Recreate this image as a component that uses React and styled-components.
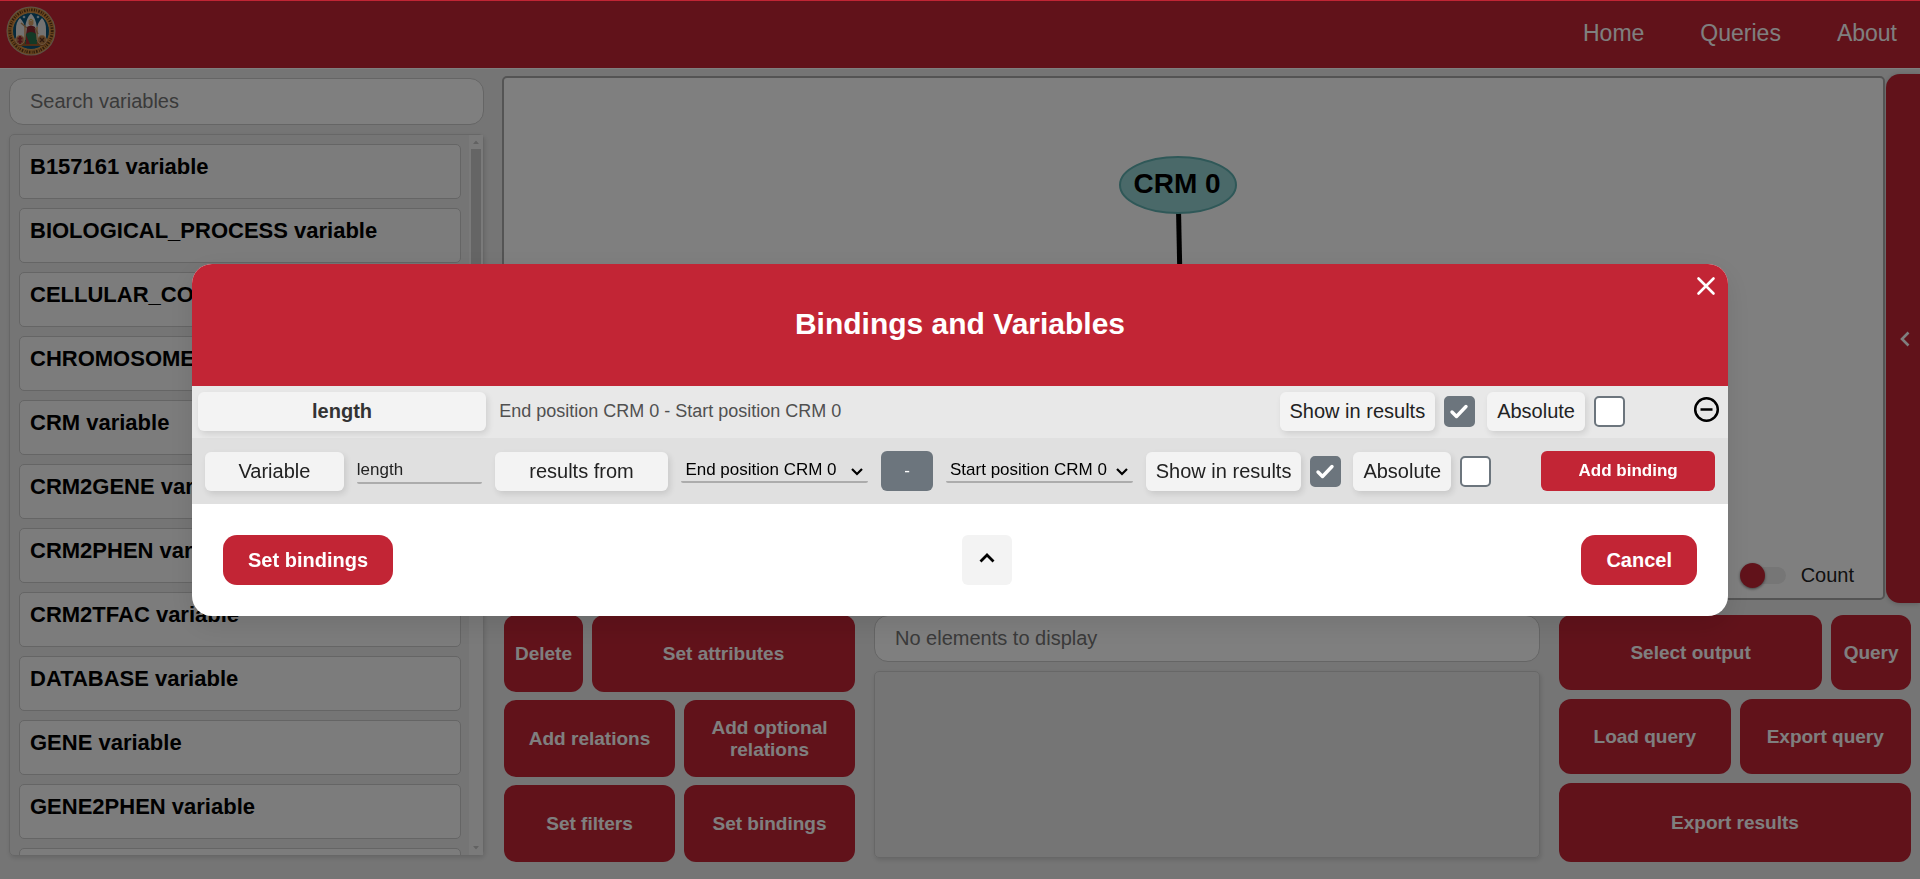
import React from "react";
import styled, { createGlobalStyle } from "styled-components";

const red = "#c22535";
const slate = "#6c757d";

const GlobalStyle = createGlobalStyle`
  *, *::before, *::after { box-sizing: border-box; }
  body {
    margin: 0;
    background: #eaeaea;
    color: #000;
    font-family: "Liberation Sans", Arial, Helvetica, sans-serif;
    font-size: 20px;
  }
  button, input, select { font: inherit; color: inherit; margin: 0; }
  button { cursor: pointer; border: 0; padding: 0; }
`;

const Page = styled.div`
  height: 100vh;
  min-height: 700px;
  display: flex;
  flex-direction: column;
`;

const Header = styled.header`
  display: flex;
  align-items: center;
  justify-content: space-between;
  height: 69px;
  padding: 0 23px 2px 6px;
  background: ${red};
  border-bottom: 1px solid #fff;
`;

const Logo = styled.svg`
  display: block;
  margin-bottom: 4px;
`;

const Nav = styled.nav`
  display: flex;
  gap: 56px;
`;

const NavLink = styled.a`
  color: #fff;
  font-size: 23px;
  text-decoration: none;
`;

const Workspace = styled.div`
  flex: 1;
  min-height: 0;
  display: grid;
  grid-template-columns: minmax(0, 475fr) minmax(0, 1418fr);
  column-gap: 18px;
  padding-left: 9px;
`;

const Sidebar = styled.aside`
  display: flex;
  flex-direction: column;
  gap: 9px;
  min-height: 0;
  padding: 9px 0 23px;
`;

const SearchBox = styled.input`
  width: 100%;
  height: 47px;
  padding: 0 20px;
  border: 1px solid #cacaca;
  border-radius: 14px;
  background: #fff;
  &::placeholder { color: #757575; opacity: 1; }
`;

const ListPanel = styled.div`
  flex: 1;
  min-height: 0;
  display: flex;
  border: 1px solid #cfcfcf;
  border-radius: 5px;
  box-shadow: 1px 2px 4px rgba(0, 0, 0, 0.12);
`;

const VariableList = styled.ul`
  flex: 1;
  margin: 0;
  padding: 9px 8px 0 9px;
  list-style: none;
  display: flex;
  flex-direction: column;
  gap: 9px;
  overflow: hidden;
`;

const VariableCard = styled.li`
  flex: none;
  height: 55px;
  padding: 9px 10px;
  border: 1px solid #cacaca;
  border-radius: 5px;
  background: #f8f8f8;
  font-size: 22px;
  font-weight: bold;
  line-height: 26px;
  white-space: nowrap;
`;

const Scrollbar = styled.div`
  width: 14px;
  display: flex;
  flex-direction: column;
  align-items: center;
  background: #f5f5f5;
`;

const ScrollThumb = styled.div`
  width: 10px;
  height: 48%;
  margin-bottom: auto;
  background: #cbcbcb;
`;

const ScrollArrow = styled.svg`
  flex: none;
  display: block;
`;

const Main = styled.main`
  display: flex;
  flex-direction: column;
  gap: 12px;
  min-height: 0;
  padding: 5px 0 17px;
`;

const CanvasRow = styled.div`
  flex: 1;
  min-height: 0;
  display: flex;
  gap: 1px;
`;

const Canvas = styled.section`
  position: relative;
  flex: 1;
  margin: 2px 0 3px;
  border: 2px solid #a8a8a8;
  border-radius: 5px;
  background: #fff;
`;

const Graph = styled.svg`
  display: block;
  position: absolute;
  width: 100%;
  height: 100%;
  font-weight: bold;
  font-size: 28px;
`;

const CountToggle = styled.label`
  position: absolute;
  right: 29px;
  bottom: 10px;
  display: flex;
  align-items: center;
  gap: 15px;
  color: #222;
`;

const Switch = styled.input`
  appearance: none;
  position: relative;
  width: 46px;
  height: 25px;
  &::before {
    content: "";
    position: absolute;
    inset: 4px 0 4px 6px;
    border-radius: 9px;
    background: #ececec;
  }
  &::after {
    content: "";
    position: absolute;
    left: 0;
    top: 0;
    width: 25px;
    height: 25px;
    border-radius: 50%;
    background: ${red};
    box-shadow: 0 1px 3px rgba(0, 0, 0, 0.5);
  }
`;

const DrawerTab = styled.button`
  width: 34px;
  display: flex;
  align-items: center;
  justify-content: center;
  padding-left: 2px;
  border-radius: 14px 0 0 14px;
  background: ${red};
  color: #fff;
  box-shadow: 0 1px 5px rgba(0, 0, 0, 0.2);
`;

const ControlRow = styled.div`
  display: grid;
  grid-template-columns: minmax(0, 351fr) minmax(0, 666fr) minmax(0, 352fr);
  column-gap: 19px;
  min-height: 247px;
  padding: 0 9px 0 2px;
`;

const ButtonStack = styled.div`
  display: grid;
  grid-template-rows: ${(p) => p.$rows};
  row-gap: ${(p) => p.$gap}px;
`;

const ButtonRow = styled.div`
  display: grid;
  grid-template-columns: ${(p) => p.$columns};
  column-gap: 9px;
`;

const ActionButton = styled.button`
  border-radius: 12px;
  background: ${red};
  color: #fff;
  font-size: 19px;
  font-weight: bold;
  line-height: 22px;
`;

const Elements = styled.section`
  display: flex;
  flex-direction: column;
  gap: 9px;
  padding-bottom: 4px;
`;

const ElementPanel = styled.div`
  flex: 1;
  border: 1px solid #cfcfcf;
  border-radius: 5px;
  box-shadow: 1px 2px 4px rgba(0, 0, 0, 0.12);
`;

const Overlay = styled.div`
  position: fixed;
  inset: 1px 0 0;
  display: flex;
  align-items: center;
  justify-content: center;
  background: rgba(0, 0, 0, 0.5);
`;

const Dialog = styled.section`
  position: relative;
  width: 80%;
  border-radius: 20px;
  overflow: hidden;
  background: #fff;
  box-shadow: 0 8px 28px rgba(0, 0, 0, 0.1);
`;

const DialogHeader = styled.header`
  display: flex;
  align-items: center;
  justify-content: center;
  height: 122px;
  padding-bottom: 2px;
  background: ${red};
  color: #fff;
`;

const DialogTitle = styled.h2`
  margin: 0;
  font-size: 30px;
  line-height: 34px;
`;

const CloseButton = styled.button`
  position: absolute;
  top: 12px;
  right: 12px;
  width: 20px;
  height: 20px;
  background: none;
  color: #fff;
  svg { display: block; }
`;

const BindingRow = styled.div`
  display: grid;
  grid-template-columns: minmax(0, 288fr) minmax(0, 767fr) auto auto;
  align-items: center;
  column-gap: 13px;
  padding: 6px 8px 7px 6px;
  background: #e8e8e8;
`;

const BindingForm = styled.form`
  display: grid;
  grid-template-columns: 139fr 125fr 174fr 187fr 52fr 187fr auto 174fr;
  align-items: center;
  column-gap: 13px;
  padding: 13px;
  background: #e0e0e0;
`;

const Pill = styled.label`
  display: flex;
  align-items: center;
  justify-content: center;
  height: 39px;
  padding: 0 10px;
  border-radius: 6px;
  background: #f3f3f3;
  color: ${(p) => (p.$strong ? "#333" : "#222")};
  font-weight: ${(p) => (p.$strong ? "bold" : "normal")};
  white-space: nowrap;
  box-shadow: 2px 3px 6px rgba(0, 0, 0, 0.11);
`;

const Expression = styled.span`
  color: #505050;
  font-size: 18px;
`;

const Options = styled.div`
  display: flex;
  align-items: center;
  gap: 12px;
  margin-right: ${(p) => p.$space}px;
`;

const Option = styled.div`
  display: flex;
  align-items: center;
  gap: 9px;
`;

const CheckWrap = styled.span`
  position: relative;
  width: 31px;
  height: 31px;
  svg {
    position: absolute;
    inset: 0;
    pointer-events: none;
  }
`;

const CheckInput = styled.input`
  appearance: none;
  display: block;
  width: 31px;
  height: 31px;
  border: 2px solid ${slate};
  border-radius: 5px;
  background: #fff;
  &:checked { background: ${slate}; }
  &:not(:checked) + svg { display: none; }
`;

const RemoveButton = styled.button`
  width: 27px;
  height: 31px;
  background: none;
`;

const NameInput = styled.input`
  width: 100%;
  min-width: 0;
  height: 25px;
  padding: 0;
  border: 0;
  border-bottom: 2px solid #acacac;
  border-radius: 2px;
  background: transparent;
  color: #222;
  font-size: 17px;
`;

const SelectWrap = styled.span`
  position: relative;
  display: block;
  svg {
    position: absolute;
    right: 5px;
    top: 7px;
    pointer-events: none;
  }
`;

const Select = styled.select`
  appearance: none;
  display: block;
  width: 100%;
  height: 23px;
  padding: 0 22px 2px 4px;
  border: 0;
  border-bottom: 2px solid #acacac;
  border-radius: 2px;
  background: transparent;
  font-size: 17px;
  line-height: 20px;
`;

const FormButton = styled.button`
  height: 40px;
  border-radius: 6px;
  background: ${(p) => (p.$neutral ? slate : red)};
  color: #fff;
  font-size: 17px;
  font-weight: ${(p) => (p.$neutral ? "normal" : "bold")};
`;

const DialogFooter = styled.footer`
  display: flex;
  align-items: center;
  justify-content: space-between;
  padding: 31px;
`;

const DialogButton = styled.button`
  height: 50px;
  padding: 0 25px;
  border-radius: 14px;
  background: ${red};
  color: #fff;
  font-weight: bold;
`;

const CollapseButton = styled.button`
  display: flex;
  align-items: center;
  justify-content: center;
  width: 50px;
  height: 50px;
  padding-bottom: 4px;
  border-radius: 6px;
  background: #f3f3f3;
`;

const variables = [
  "B157161",
  "BIOLOGICAL_PROCESS",
  "CELLULAR_COMPONENT",
  "CHROMOSOME",
  "CRM",
  "CRM2GENE",
  "CRM2PHEN",
  "CRM2TFAC",
  "DATABASE",
  "GENE",
  "GENE2PHEN",
];

const positions = ["End position CRM 0", "Start position CRM 0"];

function Seal() {
  return (
    <Logo width="50" height="50" viewBox="0 0 50 50" role="img" aria-label="University seal">
      <circle cx="25" cy="25" r="24.5" fill="#b9a58c" />
      <circle cx="25" cy="25" r="23.5" fill="#d0883c" />
      <circle cx="25" cy="25" r="21.2" fill="none" stroke="#5a3618" strokeWidth="2.8" strokeDasharray="1.2 1.1 .7 1.5 1.5 1.3" />
      <circle cx="25" cy="25" r="18.5" fill="#0d5578" stroke="#d79a52" strokeWidth="1" />
      <path d="M10 34V23Q10 16 14 12Q18 16 19 22Q20 12 25 7.5Q30 12 31 22Q32 16 36 12Q40 16 40 23V34Z" fill="#e9e6e4" />
      <path d="M19 34V21M31 34V21" stroke="#d29a62" strokeWidth="1.5" />
      <circle cx="18" cy="11" r="1.3" fill="#a8c4d2" />
      <circle cx="32" cy="11" r="1.3" fill="#a8c4d2" />
      <path d="M8 35H42Q40 39 37 40H13Q10 38 8 35Z" fill="#9c5c2a" />
      <circle cx="25" cy="17" r="2.5" fill="#d9a168" />
      <path d="M22.5 15L25 13L27.5 15" stroke="#d4a52d" fill="none" />
      <path d="M21 21Q25 18 29 21L30 29H20Z" fill="#8c2730" />
      <path d="M21 22L15 17M29 22L32 28" stroke="#b58a5b" strokeWidth="1.5" />
      <path d="M20 28Q25 24 30 28L31 38H19Z" fill="#28734d" />
      <path d="M20 29L24 38H20Z" fill="#a52c32" />
      <circle cx="14" cy="34" r="4.5" fill="#bd8758" stroke="#d9a77a" />
      <path d="M11.5 32.5H16.5M11.5 35.5H16.5M14 30V38" stroke="#9b2230" strokeWidth="1.8" />
      <circle cx="36" cy="34" r="4.5" fill="#bd8146" stroke="#d9a77a" />
      <path d="M34 32L38 36M38 32L34 36" stroke="#5c3422" strokeWidth="1.3" />
    </Logo>
  );
}

function Check({ id, ...rest }) {
  return (
    <CheckWrap>
      <CheckInput type="checkbox" id={id} {...rest} />
      <svg width="31" height="31" viewBox="0 0 31 31" fill="none" stroke="#fff" strokeWidth="3.4" strokeLinecap="round" strokeLinejoin="round">
        <path d="M8 16L12.5 20.5L22 10.5" />
      </svg>
    </CheckWrap>
  );
}

function ResultOptions({ prefix, space }) {
  return (
    <Options $space={space}>
      <Option>
        <Pill htmlFor={`${prefix}-show`}>Show in results</Pill>
        <Check id={`${prefix}-show`} defaultChecked />
      </Option>
      <Option>
        <Pill htmlFor={`${prefix}-absolute`}>Absolute</Pill>
        <Check id={`${prefix}-absolute`} />
      </Option>
    </Options>
  );
}

function PositionSelect({ id, label, value }) {
  return (
    <SelectWrap>
      <Select id={id} aria-label={label} defaultValue={value}>
        {positions.map((p) => (
          <option key={p}>{p}</option>
        ))}
      </Select>
      <svg width="12" height="9" viewBox="0 0 12 9" fill="none" stroke="#000" strokeWidth="2.2">
        <path d="M1 2L6 7L11 2" />
      </svg>
    </SelectWrap>
  );
}

function BindingsDialog() {
  return (
    <Overlay>
      <Dialog role="dialog" aria-modal="true" aria-labelledby="dialog-title">
        <DialogHeader>
          <DialogTitle id="dialog-title">Bindings and Variables</DialogTitle>
          <CloseButton type="button" aria-label="Close">
            <svg width="20" height="20" viewBox="0 0 20 20" fill="none" stroke="currentColor" strokeWidth="2.6" strokeLinecap="round">
              <path d="M2.5 2.5L17.5 17.5M17.5 2.5L2.5 17.5" />
            </svg>
          </CloseButton>
        </DialogHeader>
        <BindingRow>
          <Pill as="div" $strong>length</Pill>
          <Expression>End position CRM 0 - Start position CRM 0</Expression>
          <ResultOptions prefix="saved" space={55} />
          <RemoveButton type="button" aria-label="Remove binding">
            <svg width="27" height="27" viewBox="0 0 27 27" fill="none" stroke="#000" strokeWidth="2.5">
              <circle cx="13.5" cy="13.5" r="11.3" />
              <path d="M7.5 13.5H19.5" />
            </svg>
          </RemoveButton>
        </BindingRow>
        <BindingForm onSubmit={(e) => e.preventDefault()}>
          <Pill htmlFor="binding-name">Variable</Pill>
          <NameInput id="binding-name" type="text" defaultValue="length" />
          <Pill htmlFor="binding-first">results from</Pill>
          <PositionSelect id="binding-first" label="First value" value={positions[0]} />
          <FormButton type="button" $neutral>-</FormButton>
          <PositionSelect id="binding-second" label="Second value" value={positions[1]} />
          <ResultOptions prefix="new" space={37} />
          <FormButton type="submit">Add binding</FormButton>
        </BindingForm>
        <DialogFooter>
          <DialogButton type="button">Set bindings</DialogButton>
          <CollapseButton type="button" aria-label="Collapse">
            <svg width="16" height="12" viewBox="0 0 16 12" fill="none" stroke="#000" strokeWidth="2.8">
              <path d="M1.5 9.5L8 3L14.5 9.5" />
            </svg>
          </CollapseButton>
          <DialogButton type="button">Cancel</DialogButton>
        </DialogFooter>
      </Dialog>
    </Overlay>
  );
}

export default function App() {
  return (
    <>
      <GlobalStyle />
      <Page>
        <Header>
          <Seal />
          <Nav>
            <NavLink href="#home">Home</NavLink>
            <NavLink href="#queries">Queries</NavLink>
            <NavLink href="#about">About</NavLink>
          </Nav>
        </Header>
        <Workspace>
          <Sidebar>
            <SearchBox type="text" placeholder="Search variables" aria-label="Search variables" />
            <ListPanel>
              <VariableList>
                {variables.map((name) => (
                  <VariableCard key={name}>{name} variable</VariableCard>
                ))}
                <VariableCard aria-hidden="true" />
              </VariableList>
              <Scrollbar aria-hidden="true">
                <ScrollArrow width="14" height="14" viewBox="0 0 14 14">
                  <path d="M4 9L7 5.5L10 9Z" fill="#c4c4c4" />
                </ScrollArrow>
                <ScrollThumb />
                <ScrollArrow width="14" height="14" viewBox="0 0 14 14">
                  <path d="M4 5L7 8.5L10 5Z" fill="#c4c4c4" />
                </ScrollArrow>
              </Scrollbar>
            </ListPanel>
          </Sidebar>
          <Main>
            <CanvasRow>
              <Canvas>
                <Graph>
                  <line x1="674" y1="107" x2="678" y2="300" stroke="#000" strokeWidth="5" />
                  <ellipse cx="674" cy="107" rx="58" ry="28" fill="#94d2d2" stroke="#5fb0b0" strokeWidth="2" />
                  <text x="673" y="115" textAnchor="middle">CRM 0</text>
                </Graph>
                <CountToggle>
                  <Switch type="checkbox" role="switch" />
                  Count
                </CountToggle>
              </Canvas>
              <DrawerTab type="button" aria-label="Open panel">
                <svg width="12" height="16" viewBox="0 0 12 16" fill="none" stroke="currentColor" strokeWidth="2.6">
                  <path d="M10.5 1.5L4 8L10.5 14.5" />
                </svg>
              </DrawerTab>
            </CanvasRow>
            <ControlRow>
              <ButtonStack $rows="77fr 77fr 77fr" $gap={8}>
                <ButtonRow $columns="79fr 263fr">
                  <ActionButton type="button">Delete</ActionButton>
                  <ActionButton type="button">Set attributes</ActionButton>
                </ButtonRow>
                <ButtonRow $columns="1fr 1fr">
                  <ActionButton type="button">Add relations</ActionButton>
                  <ActionButton type="button">Add optional relations</ActionButton>
                </ButtonRow>
                <ButtonRow $columns="1fr 1fr">
                  <ActionButton type="button">Set filters</ActionButton>
                  <ActionButton type="button">Set bindings</ActionButton>
                </ButtonRow>
              </ButtonStack>
              <Elements>
                <SearchBox type="text" placeholder="No elements to display" aria-label="Elements" />
                <ElementPanel />
              </Elements>
              <ButtonStack $rows="75fr 75fr 79fr" $gap={9}>
                <ButtonRow $columns="264fr 80fr">
                  <ActionButton type="button">Select output</ActionButton>
                  <ActionButton type="button">Query</ActionButton>
                </ButtonRow>
                <ButtonRow $columns="1fr 1fr">
                  <ActionButton type="button">Load query</ActionButton>
                  <ActionButton type="button">Export query</ActionButton>
                </ButtonRow>
                <ButtonRow $columns="1fr">
                  <ActionButton type="button">Export results</ActionButton>
                </ButtonRow>
              </ButtonStack>
            </ControlRow>
          </Main>
        </Workspace>
      </Page>
      <BindingsDialog />
    </>
  );
}
